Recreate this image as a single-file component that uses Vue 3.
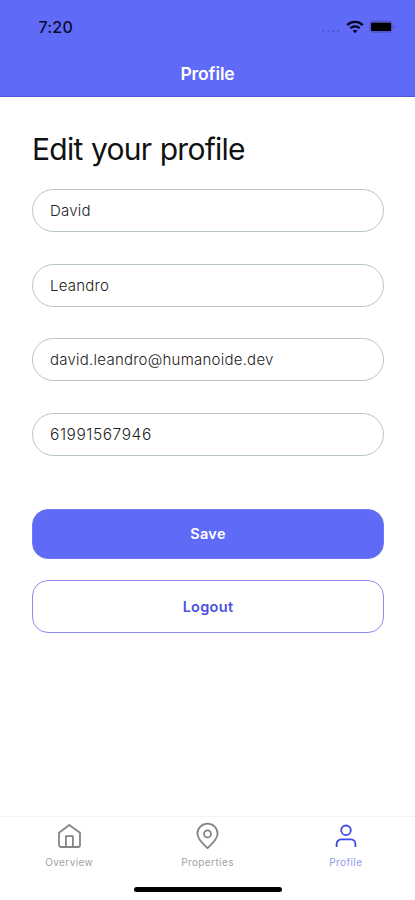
<script setup>
import { ref } from 'vue'

const fields = ref([
  { name: 'first', type: 'text', value: 'David' },
  { name: 'last', type: 'text', value: 'Leandro' },
  { name: 'email', type: 'email', value: 'david.leandro@humanoide.dev' },
  { name: 'phone', type: 'tel', value: '61991567946' },
])
</script>

<template>
  <div class="screen">
    <header class="header">
      <div class="status">
        <span class="time">7:20</span>
        <div class="indicators">
          <svg class="dots" width="20" height="4" viewBox="0 0 20 4">
            <circle cx="2.5" cy="2" r="1.1" /><circle cx="7.5" cy="2" r="1.1" />
            <circle cx="12.5" cy="2" r="1.1" /><circle cx="17.5" cy="2" r="1.1" />
          </svg>
          <svg class="wifi" width="18" height="14" viewBox="0 0 18 14">
            <path d="M1.2 5.1a11.2 11.2 0 0 1 15.6 0M4.3 8.3a6.7 6.7 0 0 1 9.4 0" fill="none" stroke="#05051c" stroke-width="2.2" />
            <path d="M9 13.2 6.7 10.8a3.4 3.4 0 0 1 4.6 0z" fill="#05051c" />
          </svg>
          <svg class="battery" width="27" height="14" viewBox="0 0 27 14">
            <rect x="0.5" y="0.5" width="23" height="12.6" rx="3.8" fill="#5359c8" />
            <path d="M24.7 4.8c1.8.6 1.8 3.4 0 4z" fill="#474cb4" />
            <rect x="2.1" y="2.7" width="20" height="8.2" rx="1" fill="#000" />
          </svg>
        </div>
      </div>
      <div class="title">Profile</div>
    </header>

    <main class="content">
      <h1 class="heading">Edit your profile</h1>
      <form class="form" @submit.prevent>
        <input v-for="f in fields" :key="f.name" v-model="f.value" class="field" :class="f.name" :type="f.type" />
        <button class="btn save" type="submit">Save</button>
        <button class="btn logout" type="button">Logout</button>
      </form>
    </main>

    <nav class="tabs">
      <div class="tab">
        <svg width="30" height="30" viewBox="0 0 30 30">
          <path d="M15.3 4 26 11.8V24a2 2 0 0 1-2 2H7a2 2 0 0 1-2-2V11.8z" />
          <path d="M11.9 26V15.2h7V26" />
        </svg>
        <span class="label overview">Overview</span>
      </div>
      <div class="tab">
        <svg width="30" height="30" viewBox="0 0 30 30">
          <path d="M15.5 27.2C11.5 23.2 5.4 18.3 5.4 12.8a10.1 10.1 0 0 1 20.2 0C25.6 18.3 19.5 23.2 15.5 27.2z" />
          <circle cx="15.5" cy="12.9" r="3.5" />
        </svg>
        <span class="label properties">Properties</span>
      </div>
      <div class="tab active">
        <svg width="30" height="30" viewBox="0 0 30 30">
          <circle cx="15" cy="9.3" r="4.8" />
          <path d="M5.6 26V23a4.6 4.6 0 0 1 4.6-4.6h9.6a4.6 4.6 0 0 1 4.6 4.6v3" />
        </svg>
        <span class="label profile">Profile</span>
      </div>
    </nav>
    <div class="home-bar"></div>
  </div>
</template>

<style>
body {
  margin: 0;
  background: #fff;
}
</style>

<style scoped>
.screen {
  width: 415px;
  height: 900px;
  display: flex;
  flex-direction: column;
  background: #fff;
  font-family: Inter, "Liberation Sans", sans-serif;
  overflow: hidden;
}
.header {
  box-sizing: border-box;
  height: 97px;
  flex: none;
  background: #5f6af7;
  border-bottom: 1px solid #5059d6;
}
.status {
  height: 54px;
  display: flex;
  justify-content: space-between;
  padding: 0 19px 0 38.5px;
}
.time {
  line-height: 54px;
  font-size: 16px;
  font-weight: 500;
  letter-spacing: 0.2px;
  color: #0b0b2b;
}
.indicators {
  display: flex;
  align-items: center;
}
.dots {
  fill: #4f57cd;
  margin: 8px 5px 0 0;
}
.wifi {
  margin-right: 5px;
}
.title {
  line-height: 40px;
  text-align: center;
  font-size: 17.5px;
  font-weight: 600;
  letter-spacing: -0.1px;
  color: #fff;
}
.content {
  flex: 1;
  padding: 32px 32px 0;
}
.heading {
  margin: 0 0 20px;
  line-height: 40px;
  font-size: 30px;
  font-weight: 400;
  letter-spacing: -0.75px;
  word-spacing: 0.8px;
  color: #111;
  white-space: nowrap;
}
.form {
  display: flex;
  flex-direction: column;
}
.field {
  box-sizing: border-box;
  width: 352px;
  height: 43px;
  margin: 0 0 31.7px;
  padding: 0 17px;
  border: 1px solid #b5c4cb;
  border-radius: 22px;
  background: #fff;
  font-family: inherit;
  font-size: 15px;
  font-weight: 300;
  letter-spacing: 0.24px;
  color: #222;
  outline: none;
}
.phone {
  font-size: 15.5px;
  letter-spacing: 0.56px;
}
.btn {
  box-sizing: border-box;
  width: 352px;
  padding: 0;
  border-radius: 16px;
  font-family: inherit;
  font-size: 14.5px;
  font-weight: 600;
  letter-spacing: 0.3px;
}
.save {
  height: 50px;
  margin-top: 21px;
  border: 1px solid #7179f0;
  background: #5f6af7;
  color: #fff;
}
.logout {
  height: 53px;
  margin-top: 21px;
  border: 1px solid #8c8eea;
  background: #fff;
  color: #4b50df;
}
.tabs {
  height: 64px;
  flex: none;
  display: flex;
  border-top: 1px solid #f3f3f3;
}
.tab {
  flex: 1;
  display: flex;
  flex-direction: column;
  align-items: center;
  padding-top: 4px;
  color: #858585;
}
.tab svg {
  fill: none;
  stroke: currentColor;
  stroke-width: 1.8;
  stroke-linejoin: round;
}
.label {
  margin-top: 4px;
  font-size: 10px;
  line-height: 14px;
  letter-spacing: 0.4px;
  color: #a2a2a2;
}
.active {
  color: #3f49df;
}
.active .label {
  color: #9297ef;
}
.home-bar {
  width: 148px;
  height: 5px;
  flex: none;
  margin: 6px auto 8px;
  border-radius: 3px;
  background: #000;
}
</style>
